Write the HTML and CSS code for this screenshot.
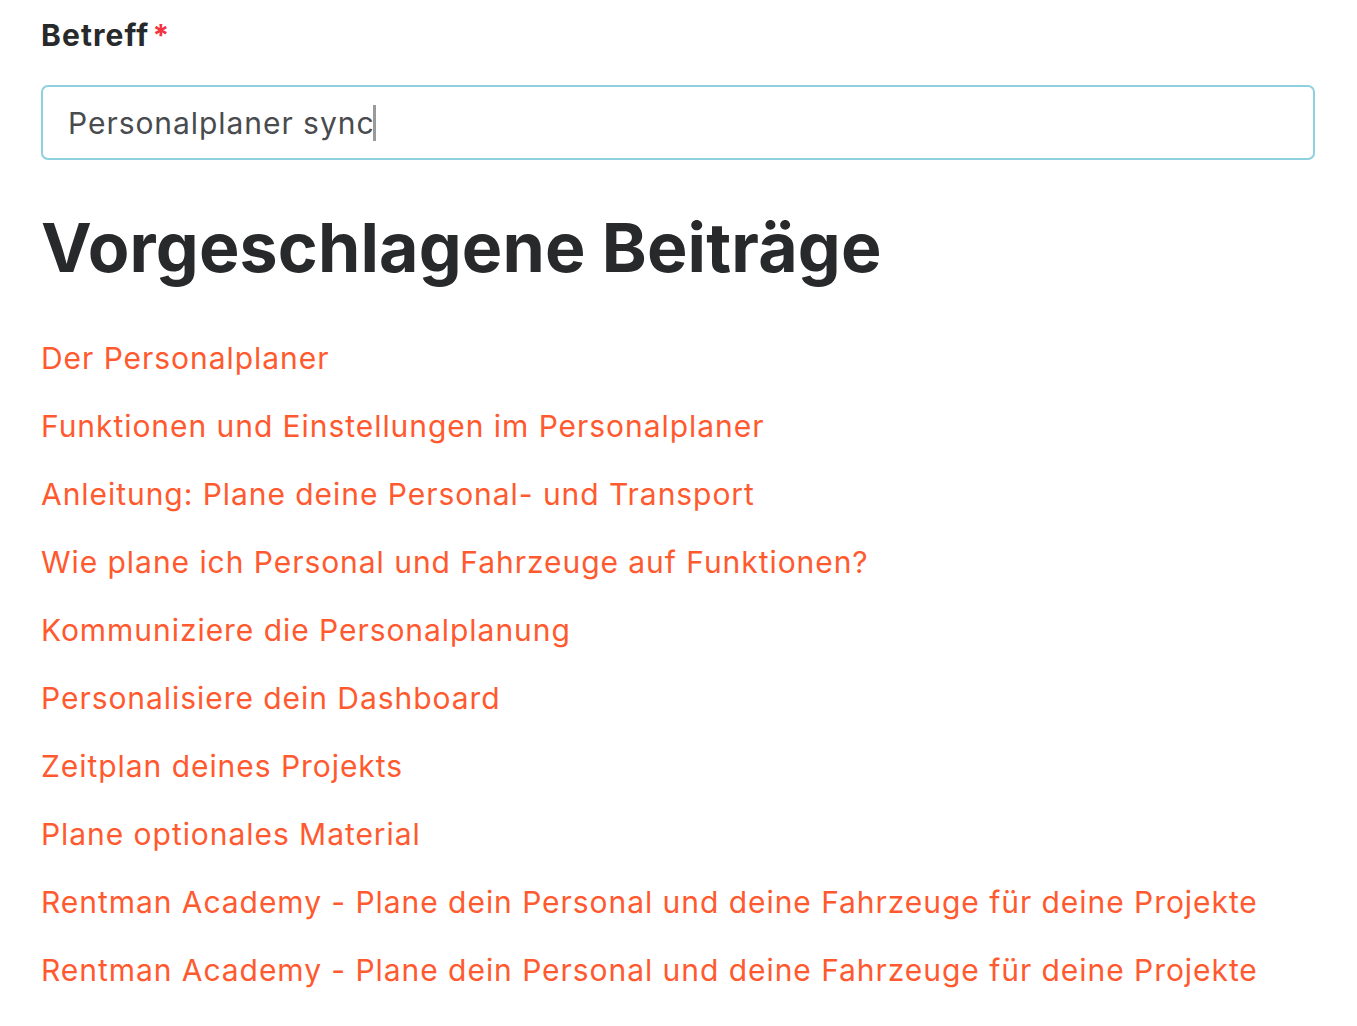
FILE: index.html
```html
<!DOCTYPE html>
<html lang="de">

<head>
    <meta charset="UTF-8" />
    <meta name="viewport" content="width=device-width, initial-scale=1.0" />
    <title>Neue Anfrage</title>
    <link rel="stylesheet" href="styles.css">
</head>

<body>
    <form class="ticket">
        <label class="field-label" for="subject">Betreff<span class="required">*</span></label>
        <div class="input-box">
            <span class="input-text">Personalplaner sync</span><span class="caret"></span>
        </div>

        <!-- Vorschläge zum Betreff -->
        <section class="suggestions">
            <h2>Vorgeschlagene Beiträge</h2>
            <ul class="suggestion-list">
                <li><a href="#">Der Personalplaner</a></li>
                <li><a href="#">Funktionen und Einstellungen im Personalplaner</a></li>
                <li><a href="#">Anleitung: Plane deine Personal- und Transport</a></li>
                <li><a href="#">Wie plane ich Personal und Fahrzeuge auf Funktionen?</a></li>
                <li><a href="#">Kommuniziere die Personalplanung</a></li>
                <li><a href="#">Personalisiere dein Dashboard</a></li>
                <li><a href="#">Zeitplan deines Projekts</a></li>
                <li><a href="#">Plane optionales Material</a></li>
                <li><a href="#">Rentman Academy - Plane dein Personal und deine Fahrzeuge für deine Projekte</a></li>
                <li><a href="#">Rentman Academy - Plane dein Personal und deine Fahrzeuge für deine Projekte</a></li>
            </ul>
        </section>
    </form>
</body>

</html>
```

FILE: styles.css
```css
* {
    box-sizing: border-box;
}

body {
    font-family: Inter, "Noto Sans", sans-serif;
    margin: 0;
    padding: 16px 42px 0 41px;
    color: #28292b;
    background: #fff;
}

.ticket {
    max-width: 1274px;
}

.field-label {
    display: block;
    font-size: 30px;
    font-weight: 700;
    line-height: 38px;
    letter-spacing: 1.1px;
}

.required {
    margin-left: 3px;
    color: #f5333f;
}

.input-box {
    display: flex;
    align-items: center;
    height: 75px;
    margin-top: 31px;
    padding: 0 25px;
    border: 2px solid #8fd0df;
    border-radius: 7px;
    font-size: 30px;
    letter-spacing: 0.95px;
    color: #494b4e;
}

.caret {
    display: inline-block;
    width: 3px;
    height: 36px;
    margin-left: -1px;
    background: #9a9a9a;
}

.suggestions h2 {
    margin: 46px 0 52px;
    font-size: 68px;
    font-weight: 700;
    line-height: 82px;
    letter-spacing: 0.15px;
}

.suggestion-list {
    list-style: none;
    margin: 0;
    padding: 0;
    display: flex;
    flex-direction: column;
    gap: 32px;
}

.suggestion-list li {
    font-size: 30px;
    line-height: 36px;
    letter-spacing: 0.95px;
}

.suggestion-list a {
    color: #ff5a2f;
    text-decoration: none;
}
```
